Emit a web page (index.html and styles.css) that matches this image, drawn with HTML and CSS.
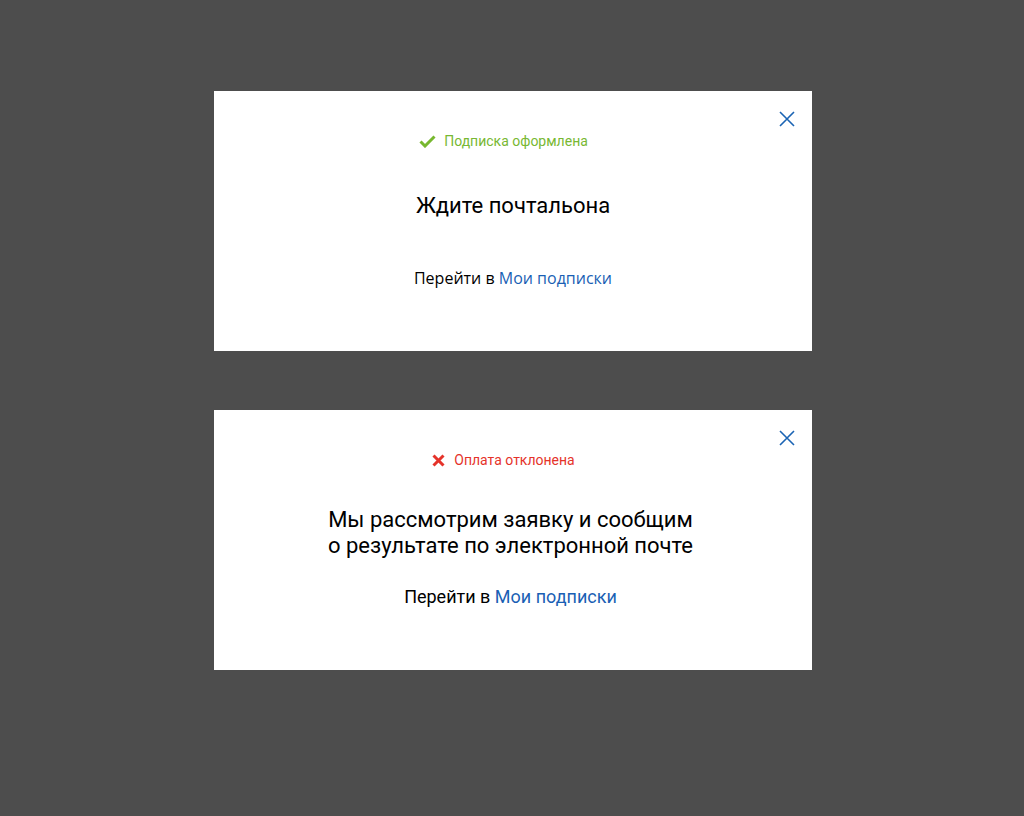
FILE: index.html
```html
<!DOCTYPE html>
<html lang="ru">
<head>
<meta charset="utf-8">
<link rel="stylesheet" href="styles.css">
</head>
<body>
<main class="stack">
  <section class="card">
    <button class="close" aria-label="Закрыть">
      <svg width="16" height="16" viewBox="0 0 16 16"><path d="M1 1L15 15M15 1L1 15" stroke="#1b64b4" stroke-width="1.6" fill="none"/></svg>
    </button>
    <div class="status status-ok">
      <svg width="17" height="13" viewBox="0 0 17 13"><path d="M1.5 6.5L6 11L15.5 1.5" stroke="#77b82f" stroke-width="3" fill="none"/></svg>
      <span>Подписка оформлена</span>
    </div>
    <h2 class="title title-one">Ждите почтальона</h2>
    <p class="goto goto-open">Перейти в <a href="#">Мои подписки</a></p>
  </section>
  <section class="card">
    <button class="close" aria-label="Закрыть">
      <svg width="16" height="16" viewBox="0 0 16 16"><path d="M1 1L15 15M15 1L1 15" stroke="#1b64b4" stroke-width="1.6" fill="none"/></svg>
    </button>
    <div class="status status-err">
      <svg width="13" height="13" viewBox="0 0 13 13"><path d="M1.5 1.5L11.5 11.5M11.5 1.5L1.5 11.5" stroke="#e5332a" stroke-width="3" fill="none"/></svg>
      <span>Оплата отклонена</span>
    </div>
    <h2 class="title title-two">Мы рассмотрим заявку и сообщим<br>о результате по электронной почте</h2>
    <p class="goto goto-roboto">Перейти в <a href="#">Мои подписки</a></p>
  </section>
</main>
</body>
</html>
```

FILE: styles.css
```css
html, body {
  margin: 0;
  padding: 0;
  background: #4d4d4d;
}
body {
  font-family: Roboto, "Noto Sans", sans-serif;
  color: #000;
}
.stack {
  display: flex;
  flex-direction: column;
  align-items: center;
  gap: 59px;
  padding-top: 91px;
  padding-left: 2px;
}
.card {
  position: relative;
  width: 598px;
  height: 260px;
  background: #fff;
  box-sizing: border-box;
  display: flex;
  flex-direction: column;
  align-items: center;
}
.close {
  position: absolute;
  top: 20px;
  right: 17px;
  width: 16px;
  height: 16px;
  padding: 0;
  border: 0;
  background: none;
  cursor: pointer;
}
.close svg { display: block; }
.status {
  display: flex;
  align-items: center;
  gap: 8px;
  font-size: 14px;
  margin-top: 41px;
  height: 18px;
  padding-right: 19px;
}
.status svg { display: block; }
.status-ok { color: #78b833; }
.status-err { color: #e5332a; gap: 9px; }
.title {
  margin: 0;
  font-weight: 400;
  font-size: 22px;
  text-align: center;
  color: #000;
}
.title-one {
  margin-top: 43px;
  line-height: 26px;
}
.title-two {
  margin-top: 38px;
  margin-right: 5px;
  line-height: 26px;
}
.goto {
  margin: 0;
  text-align: center;
  color: #000;
}
.goto a {
  color: #1a5fb4;
  text-decoration: none;
}
.goto-open {
  font-family: "Open Sans", sans-serif;
  font-size: 16px;
  margin-top: 48px;
  line-height: 22px;
}
.goto-roboto {
  font-size: 18px;
  margin-top: 27px;
  margin-right: 5px;
  line-height: 22px;
}
```
